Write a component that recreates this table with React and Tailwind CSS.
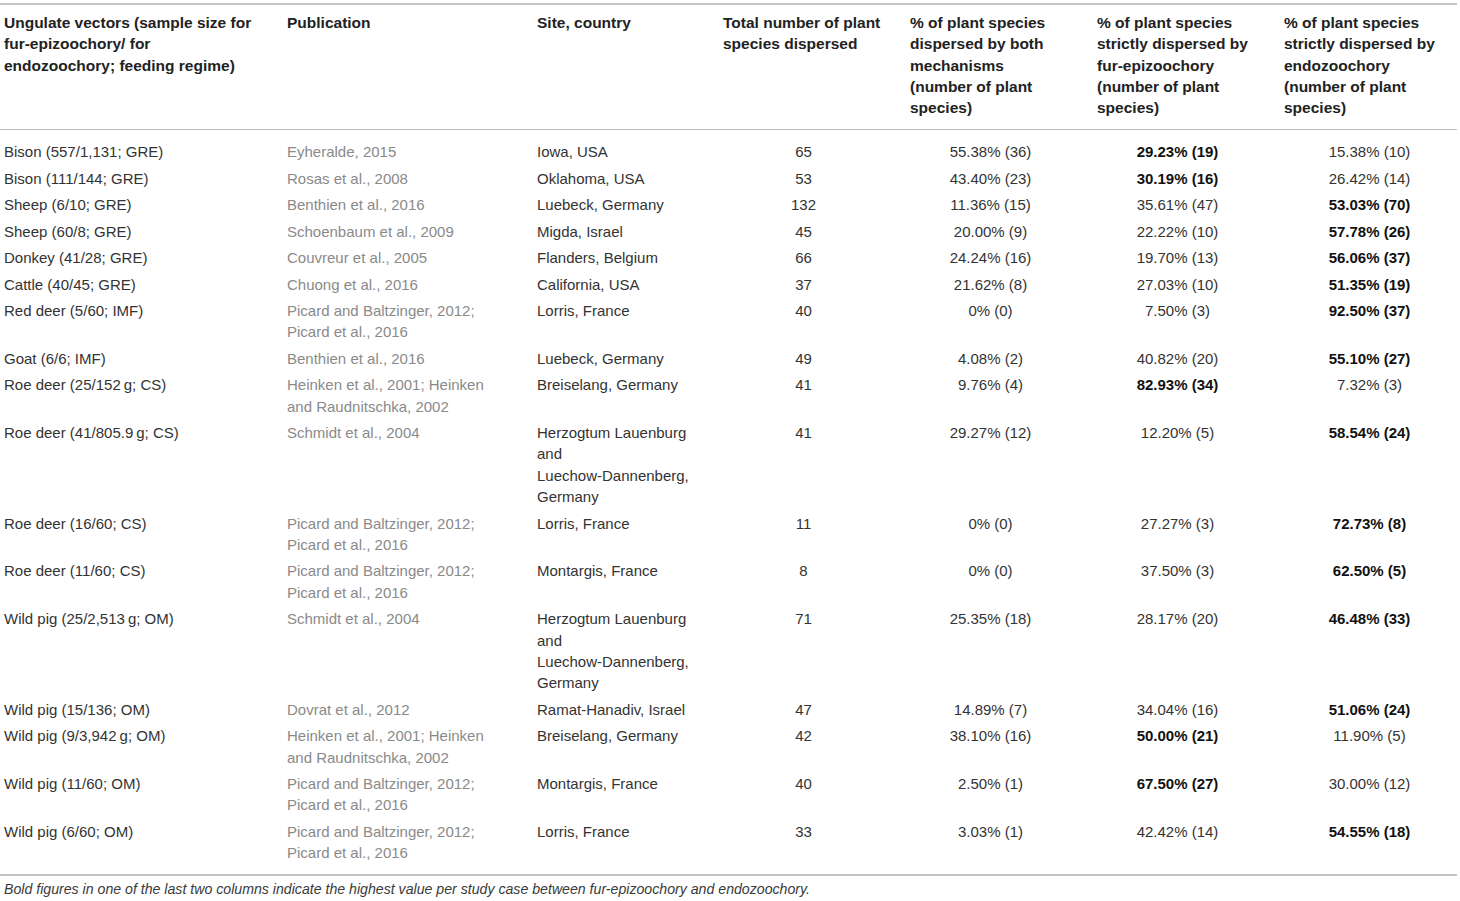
const HL = 'Herzogtum Lauenburg and Luechow-Dannenberg, Germany';

const rows = [
    ['Bison (557/1,131; GRE)', 'Eyheralde, 2015', 'Iowa, USA', '65', '55.38% (36)', '29.23% (19)', '15.38% (10)', 5],
    ['Bison (111/144; GRE)', 'Rosas et al., 2008', 'Oklahoma, USA', '53', '43.40% (23)', '30.19% (16)', '26.42% (14)', 5],
    ['Sheep (6/10; GRE)', 'Benthien et al., 2016', 'Luebeck, Germany', '132', '11.36% (15)', '35.61% (47)', '53.03% (70)', 6],
    ['Sheep (60/8; GRE)', 'Schoenbaum et al., 2009', 'Migda, Israel', '45', '20.00% (9)', '22.22% (10)', '57.78% (26)', 6],
    ['Donkey (41/28; GRE)', 'Couvreur et al., 2005', 'Flanders, Belgium', '66', '24.24% (16)', '19.70% (13)', '56.06% (37)', 6],
    ['Cattle (40/45; GRE)', 'Chuong et al., 2016', 'California, USA', '37', '21.62% (8)', '27.03% (10)', '51.35% (19)', 6],
    ['Red deer (5/60; IMF)', 'Picard and Baltzinger, 2012; Picard et al., 2016', 'Lorris, France', '40', '0% (0)', '7.50% (3)', '92.50% (37)', 6],
    ['Goat (6/6; IMF)', 'Benthien et al., 2016', 'Luebeck, Germany', '49', '4.08% (2)', '40.82% (20)', '55.10% (27)', 6],
    ['Roe deer (25/152\u2009g; CS)', 'Heinken et al., 2001; Heinken and Raudnitschka, 2002', 'Breiselang, Germany', '41', '9.76% (4)', '82.93% (34)', '7.32% (3)', 5],
    ['Roe deer (41/805.9\u2009g; CS)', 'Schmidt et al., 2004', HL, '41', '29.27% (12)', '12.20% (5)', '58.54% (24)', 6],
    ['Roe deer (16/60; CS)', 'Picard and Baltzinger, 2012; Picard et al., 2016', 'Lorris, France', '11', '0% (0)', '27.27% (3)', '72.73% (8)', 6],
    ['Roe deer (11/60; CS)', 'Picard and Baltzinger, 2012; Picard et al., 2016', 'Montargis, France', '8', '0% (0)', '37.50% (3)', '62.50% (5)', 6],
    ['Wild pig (25/2,513\u2009g; OM)', 'Schmidt et al., 2004', HL, '71', '25.35% (18)', '28.17% (20)', '46.48% (33)', 6],
    ['Wild pig (15/136; OM)', 'Dovrat et al., 2012', 'Ramat-Hanadiv, Israel', '47', '14.89% (7)', '34.04% (16)', '51.06% (24)', 6],
    ['Wild pig (9/3,942\u2009g; OM)', 'Heinken et al., 2001; Heinken and Raudnitschka, 2002', 'Breiselang, Germany', '42', '38.10% (16)', '50.00% (21)', '11.90% (5)', 5],
    ['Wild pig (11/60; OM)', 'Picard and Baltzinger, 2012; Picard et al., 2016', 'Montargis, France', '40', '2.50% (1)', '67.50% (27)', '30.00% (12)', 5],
    ['Wild pig (6/60; OM)', 'Picard and Baltzinger, 2012; Picard et al., 2016', 'Lorris, France', '33', '3.03% (1)', '42.42% (14)', '54.55% (18)', 6],
];

// header lines are broken by hand so they wrap as in the print layout
const headers = [
    ['Ungulate vectors (sample size for', 'fur-epizoochory/ for', 'endozoochory; feeding regime)'],
    ['Publication'],
    ['Site, country'],
    ['Total number of plant', 'species dispersed'],
    ['% of plant species', 'dispersed by both', 'mechanisms', '(number of plant', 'species)'],
    ['% of plant species', 'strictly dispersed by', 'fur-epizoochory', '(number of plant', 'species)'],
    ['% of plant species', 'strictly dispersed by', 'endozoochory', '(number of plant', 'species)'],
];

const Site = ({ text }) => {
    if (text !== HL) return text;
    return (
        <>
            Herzogtum Lauenburg and <span className="whitespace-nowrap">Luechow-Dannenberg,</span> Germany
        </>
    );
};

export default function App() {
    return (
        <div className="w-[1460px] h-[901px] bg-white pt-[3px] font-['Liberation_Sans',Arial,sans-serif] text-[#333]">
            <div className="w-[1457px] border-t-2 border-b-2 border-[#c4c4c4]">
                <table className="table-fixed border-collapse w-[1457px]">
                    <colgroup>
                        <col className="w-[283px]" />
                        <col className="w-[250px]" />
                        <col className="w-[186px]" />
                        <col className="w-[187px]" />
                        <col className="w-[187px]" />
                        <col className="w-[187px]" />
                        <col className="w-[177px]" />
                    </colgroup>
                    <thead>
                        <tr className="border-b border-[#bdbdbd]">
                            {headers.map((lines, i) => (
                                <th
                                    key={i}
                                    className={`text-left align-top font-bold text-[15.5px] leading-[21.3px] text-[#222] pl-[4px] pt-[7px] pb-[11px] ${i === 6 ? 'pr-[2px]' : 'pr-[22px]'}`}
                                >
                                    {lines.map((l, li) => (
                                        <div key={li} className="whitespace-nowrap">{l}</div>
                                    ))}
                                </th>
                            ))}
                        </tr>
                    </thead>
                    <tbody>
                        {rows.map((r, ri) => {
                            const first = ri === 0;
                            const last = ri === rows.length - 1;
                            const pad = `${first ? 'pt-[11px]' : 'pt-[2.5px]'} ${last ? 'pb-[10px]' : 'pb-[2.5px]'}`;
                            return (
                                <tr key={ri} className="text-[15px] leading-[21.4px]">
                                    <td className={`align-top pl-[4px] pr-[22px] ${pad}`}>{r[0]}</td>
                                    <td className={`align-top pl-[4px] pr-[22px] text-[#8a8a8a] ${pad}`}>{r[1]}</td>
                                    <td className={`align-top pl-[4px] pr-[22px] ${pad}`}>
                                        <Site text={r[2]} />
                                    </td>
                                    {[3, 4, 5, 6].map((c) => (
                                        <td
                                            key={c}
                                            className={`align-top text-center pl-[4px] ${c === 6 ? 'pr-[2px]' : 'pr-[22px]'} ${pad} ${r[7] === c ? 'font-bold text-[#111]' : ''}`}
                                        >
                                            {r[c]}
                                        </td>
                                    ))}
                                </tr>
                            );
                        })}
                    </tbody>
                </table>
            </div>
            <p className="pl-[4px] pt-[4px] italic text-[14.15px] leading-[19px] text-[#3a3a3a]">
                Bold figures in one of the last two columns indicate the highest value per study case between fur-epizoochory and endozoochory.
            </p>
        </div>
    );
}
